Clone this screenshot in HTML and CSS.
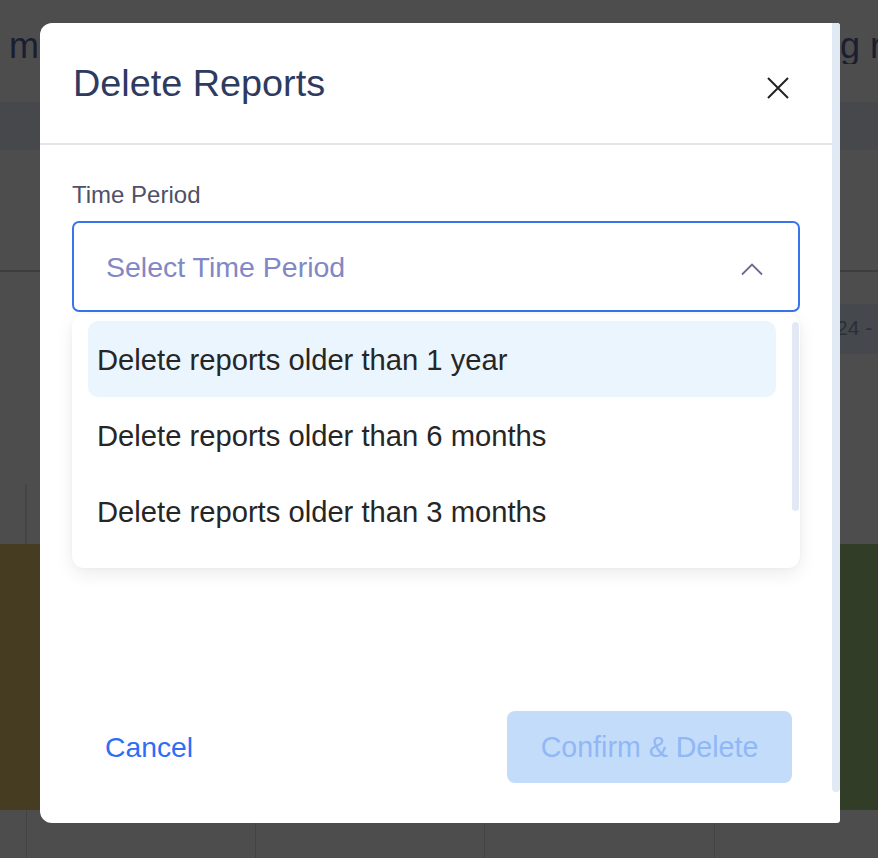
FILE: index.html
```html
<!DOCTYPE html>
<html lang="en">
<head>
<meta charset="utf-8">
<title>Delete Reports</title>
<link rel="stylesheet" href="styles.css">
</head>
<body>
<div class="page">
  <div class="topbar">
    <span class="page-title page-title-left">m</span>
    <span class="page-title page-title-right">g r</span>
  </div>
  <div class="toolbar"></div>
  <div class="filters"></div>
  <div class="daterow"><div class="date-chip">24 -</div></div>
  <div class="chart-head"><div class="axis-line"></div></div>
  <div class="chart">
    <div class="bar bar-olive"></div>
    <div class="bar bar-green"></div>
  </div>
  <div class="table-row">
    <div class="cell"></div>
    <div class="cell"></div>
    <div class="cell"></div>
    <div class="cell"></div>
    <div class="cell"></div>
  </div>
</div>

<div class="modal" role="dialog" aria-labelledby="modal-title">
  <div class="modal-main">
    <div class="modal-header">
      <h2 class="modal-title" id="modal-title">Delete Reports</h2>
      <button class="close-btn" aria-label="Close">
        <svg width="22" height="22" viewBox="0 0 22 22"><path d="M1 1 L21 21 M21 1 L1 21" stroke="#222222" stroke-width="2" fill="none"/></svg>
      </button>
    </div>
    <div class="modal-body">
      <div class="field-label">Time Period</div>
      <div class="select">
        <span class="select-placeholder">Select Time Period</span>
        <svg class="chevron" width="24" height="14" viewBox="0 0 24 14"><path d="M2 12.5 L12 2.5 L22 12.5" stroke="#6a6a92" stroke-width="1.8" fill="none"/></svg>
      </div>
      <div class="dropdown">
        <ul class="options">
          <li class="option option-active">Delete reports older than 1 year</li>
          <li class="option">Delete reports older than 6 months</li>
          <li class="option">Delete reports older than 3 months</li>
        </ul>
        <div class="dropdown-thumb"></div>
      </div>
    </div>
    <div class="modal-footer">
      <button class="btn-cancel">Cancel</button>
      <button class="btn-confirm" disabled>Confirm &amp; Delete</button>
    </div>
  </div>
  <div class="modal-scroll"></div>
</div>
</body>
</html>
```

FILE: styles.css
```css
* { box-sizing: border-box; }

html, body {
  margin: 0;
  padding: 0;
}

body {
  width: 878px;
  height: 858px;
  overflow: hidden;
  position: relative;
  background: #4d4d4d;
  font-family: "Liberation Sans", Arial, Helvetica, sans-serif;
}

/* ---------- dimmed page behind the dialog ---------- */
.page {
  display: flex;
  flex-direction: column;
  width: 878px;
}

.topbar {
  height: 102px;
  display: flex;
  justify-content: space-between;
  align-items: flex-start;
  overflow: hidden;
}

.page-title {
  font-size: 36px;
  line-height: 1;
  color: #1b1e30;
  padding-top: 28px;
  white-space: nowrap;
}

.page-title-left { margin-left: 9px; }
.page-title-right { width: 38px; overflow: hidden; }

.toolbar {
  height: 48px;
  background: #46484b;
}

.filters {
  height: 122px;
  border-bottom: 2px solid #3d3e42;
}

.daterow {
  height: 82px;
  padding-top: 32px;
  display: flex;
  justify-content: flex-end;
}

.date-chip {
  width: 38px;
  height: 50px;
  background: #45484c;
  color: #2b2f38;
  font-size: 21px;
  line-height: 48px;
  white-space: nowrap;
  overflow: hidden;
  text-indent: -4px;
}

.chart-head {
  height: 190px;
  display: flex;
  align-items: flex-end;
}

.axis-line {
  margin-left: 25px;
  width: 2px;
  height: 60px;
  background: #444548;
}

.chart {
  height: 266px;
  display: flex;
  justify-content: space-between;
}

.bar { width: 200px; height: 100%; }
.bar-olive { background: #463c22; }
.bar-green { background: #323d28; }

.table-row {
  height: 48px;
  display: grid;
  grid-template-columns: 26px 229px 229px 230px 1fr;
}

.cell + .cell { border-left: 1px solid #434343; }

/* ---------- dialog ---------- */
.modal {
  position: absolute;
  left: 40px;
  top: 23px;
  width: 800px;
  height: 800px;
  background: #ffffff;
  border-radius: 12px 3px 3px 12px;
  display: flex;
  overflow: hidden;
}

.modal-main {
  flex: 1;
  display: flex;
  flex-direction: column;
  min-width: 0;
}

.modal-scroll {
  width: 8px;
  height: 769px;
  background: #e1e9f5;
  border-radius: 0 0 4px 4px;
}

.modal-header {
  height: 122px;
  border-bottom: 2px solid #e4e4e4;
  display: flex;
  align-items: center;
  justify-content: space-between;
  padding: 0 43px 0 33px;
}

.modal-title {
  margin: 2px 0 0 0;
  font-size: 37.8px;
  font-weight: 400;
  color: #2e3a60;
  line-height: 1.15;
}

.close-btn {
  margin-top: 10px;
  padding: 0;
  border: 0;
  background: none;
  width: 22px;
  height: 22px;
  display: flex;
  cursor: pointer;
}

.modal-body {
  padding: 36px 32px 0 32px;
  display: flex;
  flex-direction: column;
}

.field-label {
  font-size: 24px;
  line-height: 28px;
  color: #4e5168;
}

.select {
  margin-top: 12px;
  height: 91px;
  border: 2px solid #3a74ec;
  border-radius: 7px;
  display: flex;
  align-items: center;
  justify-content: space-between;
  padding: 2px 34px 0 32px;
}

.select-placeholder {
  font-size: 28.5px;
  color: #8188c4;
}

.chevron { margin-top: 3px; }

.dropdown {
  margin-top: 2px;
  height: 254px;
  background: #ffffff;
  border-radius: 12px;
  box-shadow: 0 6px 18px rgba(0, 0, 0, 0.08), 0 0 4px rgba(0, 0, 0, 0.03);
  display: flex;
  gap: 16px;
  padding: 7px 1px 19px 16px;
}

.options {
  list-style: none;
  margin: 0;
  padding: 0;
  flex: 1;
}

.option {
  height: 76px;
  display: flex;
  align-items: center;
  padding: 3px 0 0 9px;
  font-size: 29.2px;
  color: #262626;
  border-radius: 10px;
  white-space: nowrap;
}

.option-active { background: #ebf5fd; }

.dropdown-thumb {
  width: 7px;
  height: 189px;
  margin-top: 1px;
  border-radius: 4px;
  background: #e2e9f4;
}

.modal-footer {
  margin-top: auto;
  display: flex;
  justify-content: space-between;
  align-items: center;
  padding: 0 40px 40px 65px;
}

.btn-cancel {
  border: 0;
  background: none;
  padding: 0;
  font-family: inherit;
  font-size: 28.3px;
  color: #2f6df5;
  cursor: pointer;
}

.btn-confirm {
  width: 285px;
  height: 72px;
  border: 0;
  border-radius: 8px;
  background: #c3dcfa;
  color: #91b7f6;
  font-family: inherit;
  font-size: 28.6px;
  padding: 0;
}
```
